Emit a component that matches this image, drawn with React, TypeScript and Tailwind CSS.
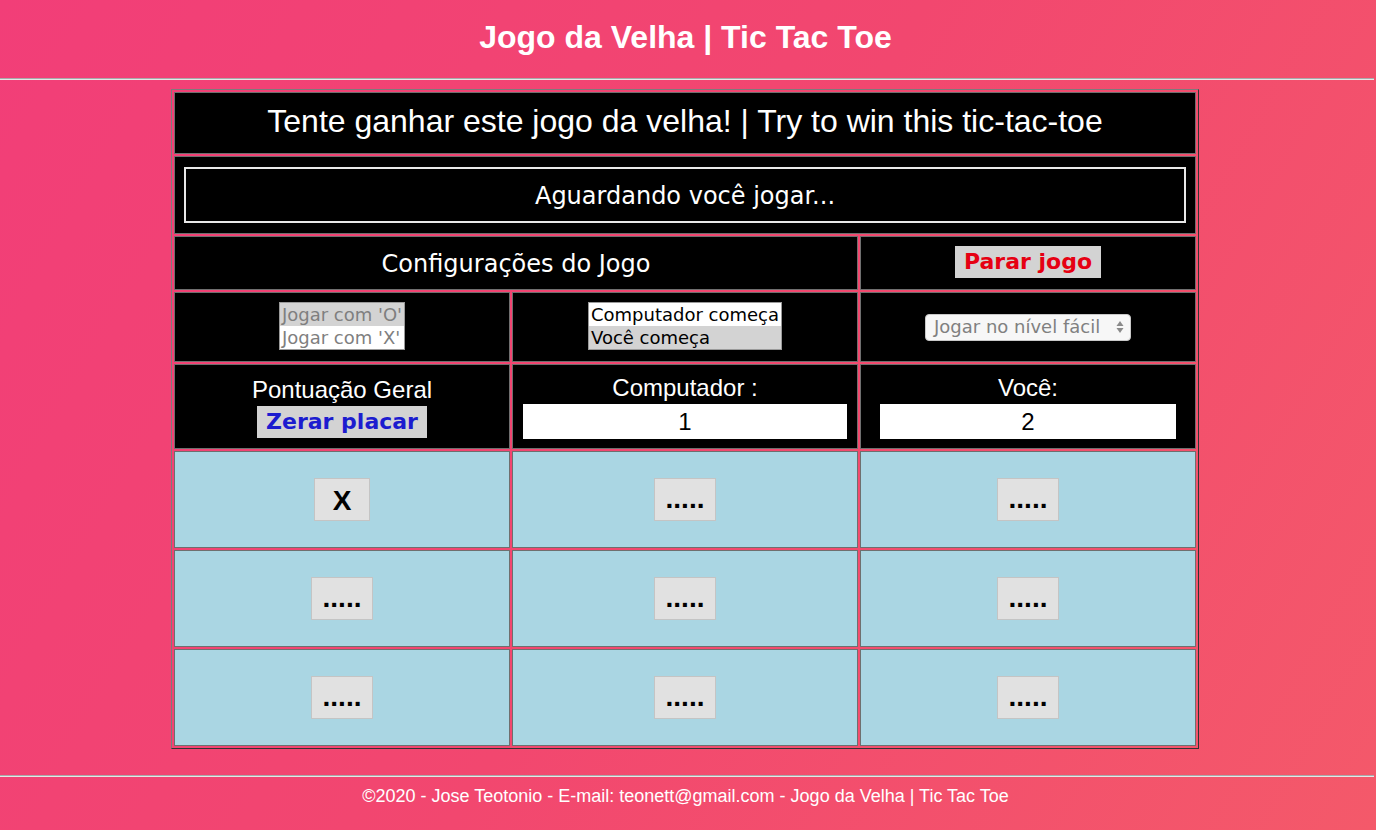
import React from "react";

const arial = "font-['Liberation_Sans',Arial,sans-serif]";
const verdana = "font-['DejaVu_Sans',Verdana,sans-serif]";

function Cell({ children, className = "" }: { children?: React.ReactNode; className?: string }) {
  return (
    <div className={`box-border border border-[#6f6f6f] flex flex-col items-center justify-center ${className}`}>
      {children}
    </div>
  );
}

function BoardButton({ label }: { label: string }) {
  const w = label === "X" ? "w-[56px]" : "w-[62px]";
  return (
    <div
      className={`${w} h-[43px] box-border border border-[#c4c4c4] bg-[#e1e1e1] flex items-center justify-center text-[28px] font-bold text-black ${arial} leading-none`}
    >
      <span className={label === "X" ? "mt-[2px]" : "mt-[-2px]"}>{label}</span>
    </div>
  );
}

export default function App() {
  const board = ["X", ".....", ".....", ".....", ".....", ".....", ".....", ".....", "....."];
  return (
    <div className={`min-h-[830px] w-full bg-[linear-gradient(120deg,#f23e78_0%,#f2476f_50%,#f4596a_100%)] ${arial} text-white`}>
      <header className="h-[78px] w-[1371px] flex items-center justify-center">
        <h1 className="text-[32px] font-bold leading-none mt-[-4px]">Jogo da Velha | Tic Tac Toe</h1>
      </header>
      <div className="h-[2px] w-[1374px] border-t border-[#a9a9a9] border-b border-b-[#e6e6e6]" />

      <main className="flex justify-start pl-[171px] pt-[9px]">
        <div className="box-border w-[1028px] border border-t-[#7c7c7c] border-l-[#7c7c7c] border-r-[#333] border-b-[#333] p-[2px] grid grid-cols-[336px_346px_336px] grid-rows-[62px_78px_54px_70px_85px_97px_97px_97px] gap-[2px]">
          <Cell className="col-span-3 bg-black">
            <span className="text-[32px] leading-none mt-[-4px]">Tente ganhar este jogo da velha! | Try to win this tic-tac-toe</span>
          </Cell>

          <Cell className="col-span-3 bg-black px-[9px]">
            <div className={`w-full h-[56px] box-border border-2 border-[#e8e8e8] flex items-center justify-center ${verdana} text-[24px]`}>
              <span className="mt-[1px]">Aguardando você jogar...</span>
            </div>
          </Cell>

          <Cell className="col-span-2 bg-black">
            <span className={`${verdana} text-[24px] leading-none mt-[1px]`}>Configurações do Jogo</span>
          </Cell>
          <Cell className="bg-black">
            <div className={`h-[32px] px-[9px] bg-[#d3d3d3] flex items-center ${verdana} font-bold text-[22px] text-[#e60012] mt-[-3px]`}>
              Parar jogo
            </div>
          </Cell>

          <Cell className="bg-black">
            <div className={`box-border border border-[#9a9a9a] w-fit ${verdana} text-[18px] leading-[23px] text-[#7f7f7f] mt-[-3px]`}>
              <div className="bg-[#d3d3d3] pl-[2px] pr-[2px]">Jogar com 'O'</div>
              <div className="bg-white pl-[2px] pr-[2px]">Jogar com 'X'</div>
            </div>
          </Cell>
          <Cell className="bg-black">
            <div className={`box-border border border-[#9a9a9a] w-fit ${verdana} text-[18px] leading-[23px] text-black mt-[-3px]`}>
              <div className="bg-white pl-[2px] pr-[2px]">Computador começa</div>
              <div className="bg-[#d3d3d3] pl-[2px] pr-[2px]">Você começa</div>
            </div>
          </Cell>
          <Cell className="bg-black">
            <div className={`w-[206px] h-[27px] box-border rounded-[4px] bg-[#f7f7f7] border border-[#c8c8c8] flex items-center justify-between pl-[8px] pr-[6px] ${verdana} text-[18px] text-[#808080]`}>
              <span className="leading-none">Jogar no nível fácil</span>
              <svg width="8" height="14" viewBox="0 0 8 14">
                <path d="M4 1 L7.5 6 H0.5 Z" fill="#8a8a8a" />
                <path d="M4 13 L7.5 8 H0.5 Z" fill="#8a8a8a" />
              </svg>
            </div>
          </Cell>

          <Cell className="bg-black">
            <span className="text-[24px] leading-none mt-[2px]">Pontuação Geral</span>
            <div className={`mt-[4px] h-[32px] px-[9px] bg-[#d3d3d3] flex items-center ${verdana} font-bold text-[22px] text-[#1c1ccf]`}>
              Zerar placar
            </div>
          </Cell>
          <Cell className="bg-black">
            <span className="text-[24px] leading-none mt-[2px]">Computador :</span>
            <div className="mt-[4px] w-[324px] h-[35px] bg-white text-black text-[24px] flex items-center justify-center">1</div>
          </Cell>
          <Cell className="bg-black">
            <span className="text-[24px] leading-none mt-[2px]">Você:</span>
            <div className="mt-[4px] w-[296px] h-[35px] bg-white text-black text-[24px] flex items-center justify-center">2</div>
          </Cell>

          {board.map((b, i) => (
            <Cell key={i} className="bg-[#aad6e3]">
              <BoardButton label={b} />
            </Cell>
          ))}
        </div>
      </main>

      <div className="mt-[26px] h-[2px] w-[1374px] border-t border-[#a9a9a9] border-b border-b-[#e6e6e6]" />
      <footer className="w-[1371px] flex justify-center pt-[10px] text-[18px] leading-none">
        ©2020 - Jose Teotonio - E-mail: teonett@gmail.com - Jogo da Velha | Tic Tac Toe
      </footer>
    </div>
  );
}
